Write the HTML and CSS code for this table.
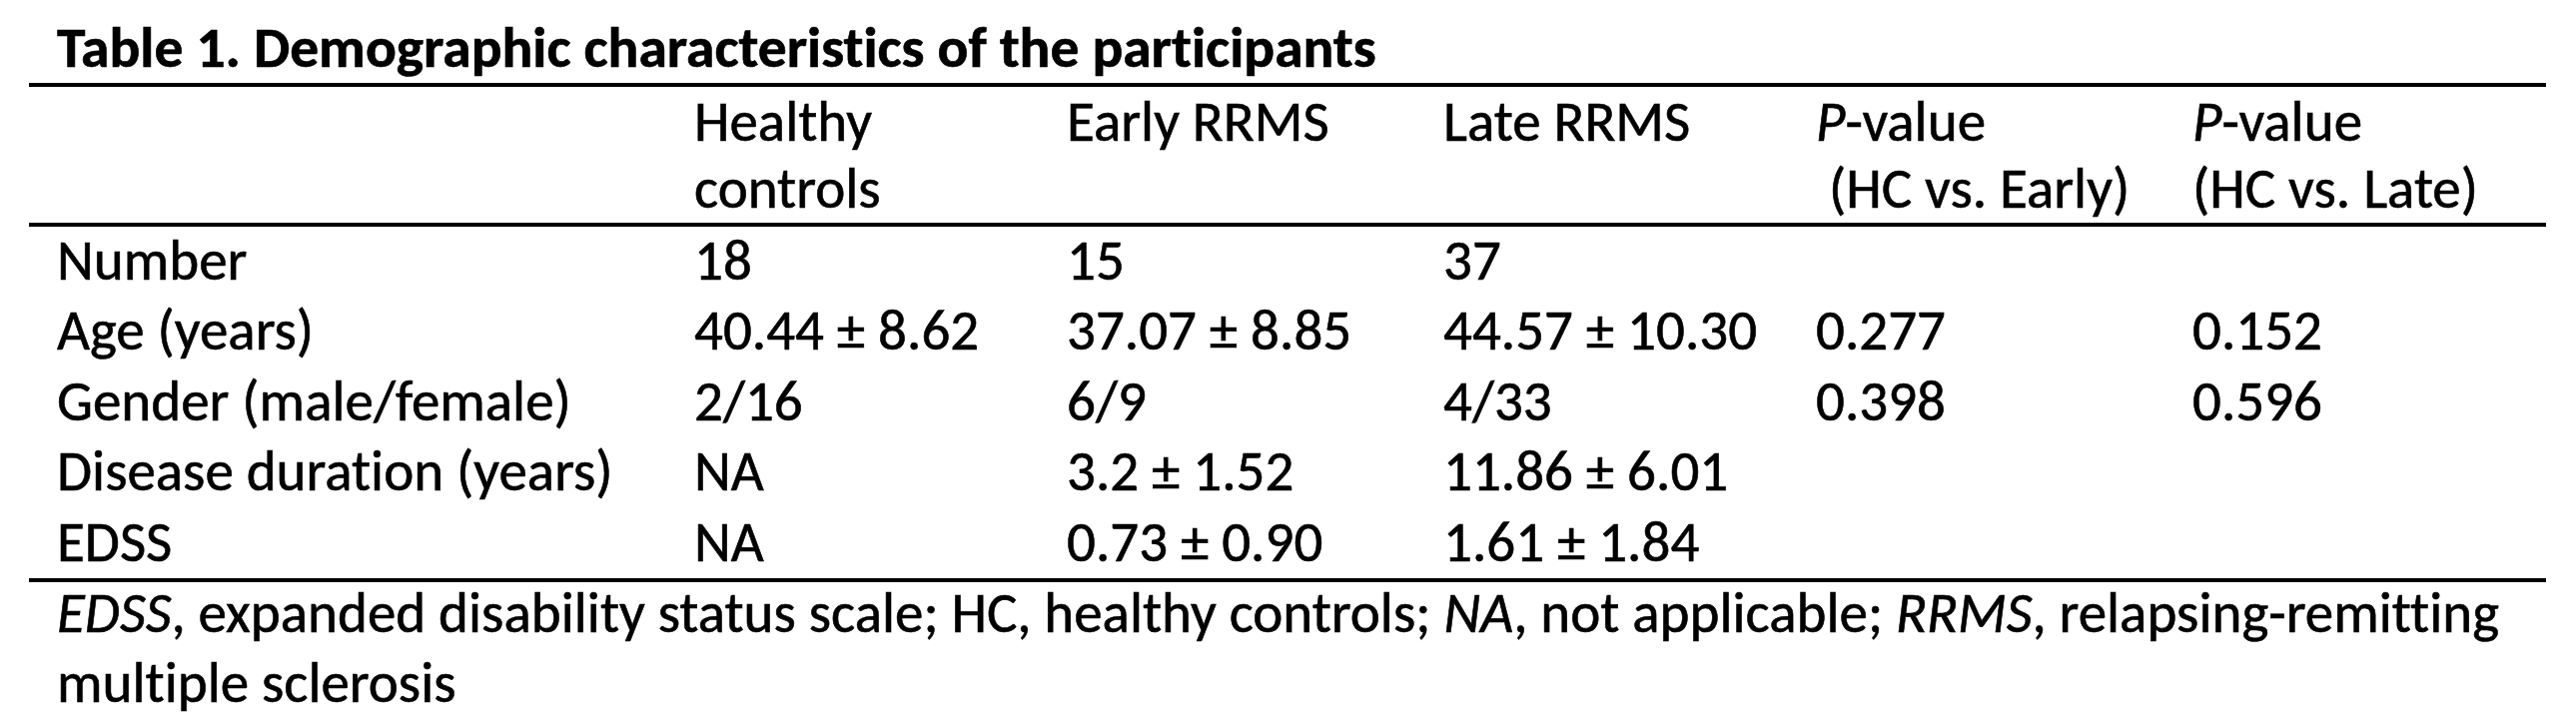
FILE: index.html
```html
<!DOCTYPE html>
<html lang="en">
<head>
<meta charset="utf-8">
<title>Table 1. Demographic characteristics of the participants</title>
<link rel="stylesheet" href="styles.css">
</head>
<body>
<div class="page">
  <h1 class="title">Table 1. Demographic characteristics of the participants</h1>
  <table class="demo">
    <colgroup>
      <col class="c-label">
      <col class="c-hc">
      <col class="c-early">
      <col class="c-late">
      <col class="c-p1">
      <col class="c-p2">
    </colgroup>
    <thead>
      <tr>
        <th></th>
        <th>Healthy<br>controls</th>
        <th>Early RRMS</th>
        <th>Late RRMS</th>
        <th><i class="it">P</i>-value<br>&nbsp;(HC vs. Early)</th>
        <th><i class="it">P</i>-value<br>(HC vs. Late)</th>
      </tr>
    </thead>
    <tbody>
      <tr><td>Number</td><td>18</td><td>15</td><td>37</td><td></td><td></td></tr>
      <tr><td>Age (years)</td><td>40.44 ± 8.62</td><td>37.07 ± 8.85</td><td>44.57 ± 10.30</td><td>0.277</td><td>0.152</td></tr>
      <tr><td>Gender (male/female)</td><td>2/16</td><td>6/9</td><td>4/33</td><td>0.398</td><td>0.596</td></tr>
      <tr><td>Disease duration (years)</td><td>NA</td><td>3.2 ± 1.52</td><td>11.86 ± 6.01</td><td></td><td></td></tr>
      <tr><td>EDSS</td><td>NA</td><td>0.73 ± 0.90</td><td>1.61 ± 1.84</td><td></td><td></td></tr>
    </tbody>
  </table>
  <p class="note"><i class="it">EDSS</i>, expanded disability status scale; HC, healthy controls; <i class="it">NA</i>, not applicable; <i class="it">RRMS</i>, relapsing-remitting<br>multiple sclerosis</p>
</div>
</body>
</html>
```
FILE: styles.css
```css
html, body {
  margin: 0;
  padding: 0;
  background: #ffffff;
}

body {
  font-family: Carlito, Calibri, Lato, "Liberation Sans", sans-serif;
  font-size: 57px;
  color: #000000;
  font-variant-ligatures: none;
  font-feature-settings: "liga" 0, "clig" 0;
  -webkit-text-stroke: 0.6px #000000;
}

.page {
  width: 2520px;
  padding: 15px 0 0 29px;
}

.title {
  margin: 0 0 3px 0;
  padding-left: 28px;
  font-size: 57.5px;
  font-weight: bold;
  line-height: 65px;
  height: 65px;
}

.demo {
  width: 2520px;
  table-layout: fixed;
  border-collapse: collapse;
  border-top: 4px solid #000;
  border-bottom: 4px solid #000;
}

.c-label { width: 638px; }
.c-hc    { width: 373px; }
.c-early { width: 377px; }
.c-late  { width: 373px; }
.c-p1    { width: 377px; }
.c-p2    { width: 382px; }

.demo th,
.demo td {
  text-align: left;
  vertical-align: top;
  font-weight: normal;
  padding: 0 0 0 28px;
  white-space: nowrap;
}

.demo thead th {
  line-height: 67px;
  padding-top: 1px;
  padding-bottom: 1px;
  border-bottom: 4px solid #000;
}

.demo tbody td {
  line-height: 64.4px;
  padding-top: 2px;
  padding-bottom: 4px;
}

.it {
  font-style: italic;
}

.note {
  margin: -4px 0 0 0;
  padding: 0 0 0 28px;
  line-height: 70px;
  white-space: nowrap;
}
```
